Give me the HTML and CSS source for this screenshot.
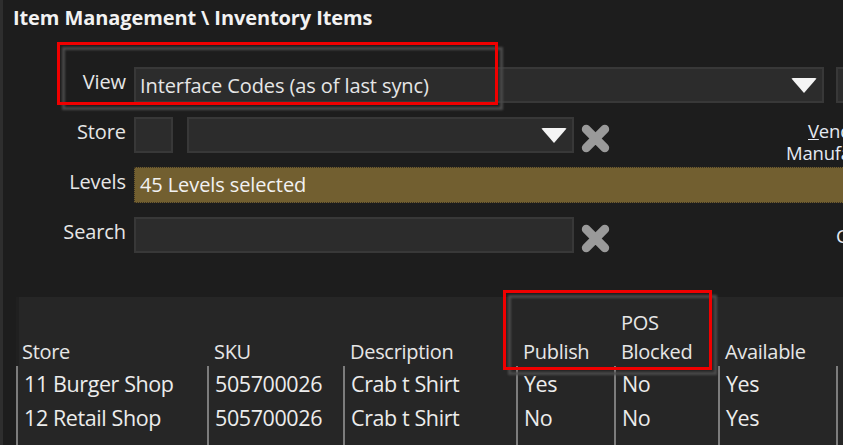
FILE: index.html
```html
<!DOCTYPE html>
<html>
<head>
<meta charset="utf-8">
<link rel="stylesheet" href="styles.css">
</head>
<body>
<div class="page">
  <div class="rail"></div>
  <div class="main">
    <h1 class="title">Item Management \ Inventory Items</h1>
    <div class="form">
      <div class="row">
        <div class="label">View</div>
        <div class="select view-select"><span class="value">Interface Codes (as of last sync)</span><span class="arrow"></span></div>
        <div class="box stub"></div>
      </div>
      <div class="row">
        <div class="label">Store</div>
        <div class="box code"></div>
        <div class="select store-select"><span class="value"></span><span class="arrow"></span></div>
        <svg class="clear" viewBox="0 0 30 30"><path d="M6 6 L24 24 M24 6 L6 24" /></svg>
        <div class="side-labels">
          <div class="side vendor"><u>V</u>endor</div>
          <div class="side">Manufacturer</div>
        </div>
      </div>
      <div class="row">
        <div class="label">Levels</div>
        <div class="levels">45 Levels selected</div>
      </div>
      <div class="row">
        <div class="label">Search</div>
        <div class="box search"></div>
        <svg class="clear" viewBox="0 0 30 30"><path d="M6 6 L24 24 M24 6 L6 24" /></svg>
        <div class="side-c">C</div>
      </div>
    </div>
    <div class="grid">
      <div class="hd first">Store</div>
      <div class="hd">SKU</div>
      <div class="hd">Description</div>
      <div class="hd">Publish</div>
      <div class="hd">POS<br>Blocked</div>
      <div class="hd">Available</div>
      <div class="hd"></div>

      <div class="cell first">11 Burger Shop</div>
      <div class="cell">505700026</div>
      <div class="cell">Crab t Shirt</div>
      <div class="cell">Yes</div>
      <div class="cell">No</div>
      <div class="cell">Yes</div>
      <div class="cell"></div>

      <div class="cell first">12 Retail Shop</div>
      <div class="cell">505700026</div>
      <div class="cell">Crab t Shirt</div>
      <div class="cell">No</div>
      <div class="cell">No</div>
      <div class="cell">Yes</div>
      <div class="cell"></div>

      <div class="cell first filler"></div>
      <div class="cell filler"></div>
      <div class="cell filler"></div>
      <div class="cell filler"></div>
      <div class="cell filler"></div>
      <div class="cell filler"></div>
      <div class="cell filler"></div>
    </div>
  </div>
  <div class="callout callout-view"></div>
  <div class="callout callout-cols"></div>
</div>
</body>
</html>
```

FILE: styles.css
```css
* { box-sizing: border-box; }
html, body {
  margin: 0;
  padding: 0;
  width: 843px;
  height: 445px;
  overflow: hidden;
  background: #1d1d1d;
}
.page {
  position: relative;
  display: flex;
  width: 843px;
  height: 445px;
  font-family: "Open Sans", "Noto Sans", sans-serif;
  color: #e8e8e8;
}
.rail {
  width: 3px;
  flex-shrink: 0;
  background: #2e2e2e;
}
.main {
  flex: 1;
  min-width: 0;
  overflow: hidden;
  display: flex;
  flex-direction: column;
}
.title {
  margin: 0;
  padding: 6px 0 0 10px;
  font-size: 20px;
  line-height: 24px;
  font-weight: 700;
  color: #f2f2f2;
  letter-spacing: -0.1px;
  white-space: nowrap;
}
.form {
  margin-top: 37px;
  display: flex;
  flex-direction: column;
  gap: 14px;
}
.row {
  display: flex;
  align-items: center;
  height: 36px;
  flex-shrink: 0;
}
.label {
  width: 123px;
  flex-shrink: 0;
  text-align: right;
  font-size: 20px;
  line-height: 24px;
  margin-right: 8px;
  margin-top: -6px;
  color: #e6e6e6;
  letter-spacing: -0.1px;
}
.select, .box {
  height: 36px;
  background: #2c2c2c;
  border: 2px solid #383838;
  flex-shrink: 0;
}
.select {
  display: flex;
  align-items: center;
  justify-content: space-between;
  padding: 0 5px 0 4px;
}
.value {
  font-size: 20px;
  color: #e6e6e6;
  letter-spacing: -0.1px;
  white-space: nowrap;
}
.arrow {
  width: 0;
  height: 0;
  border-left: 13px solid transparent;
  border-right: 13px solid transparent;
  border-top: 15px solid #f4f4f4;
  border-radius: 2px;
}
.view-select { width: 690px; }
.stub { width: 40px; margin-left: 12px; }
.code { width: 39px; }
.store-select { width: 387px; margin-left: 14px; }
.search { width: 440px; }
.clear {
  width: 31px;
  height: 31px;
  margin-left: 6px;
  margin-top: 6px;
  flex-shrink: 0;
}
.clear path {
  stroke: #9a9a9a;
  stroke-width: 8.5;
  stroke-linecap: round;
  fill: none;
}
.side-labels {
  margin-left: 175px;
  margin-top: 14px;
  display: flex;
  flex-direction: column;
  font-size: 18.5px;
  line-height: 22px;
  letter-spacing: -0.2px;
  color: #e4e9f2;
  white-space: nowrap;
  flex-shrink: 0;
}
.vendor { padding-left: 22px; }
.side-c {
  margin-left: 225px;
  margin-top: 2px;
  font-size: 19px;
  color: #e4e9f2;
  flex-shrink: 0;
}
.levels {
  width: 760px;
  flex-shrink: 0;
  height: 36px;
  background: #725f30;
  border: 1px dotted #3a3120;
  font-size: 20px;
  line-height: 34px;
  padding-left: 5px;
  color: #f2f2f2;
  letter-spacing: -0.1px;
}
.grid {
  margin-top: 44px;
  margin-left: 13px;
  flex: 1;
  background: #262626;
  display: grid;
  grid-template-columns: 191px 136px 173px 98px 104px 118px 60px;
  grid-template-rows: 69px 34px 34px 1fr;
}
.hd {
  display: flex;
  align-items: flex-end;
  padding-left: 7px;
  font-size: 20px;
  line-height: 29px;
  color: #e6e6e6;
  letter-spacing: -0.3px;
  white-space: nowrap;
}
.hd.first {
  padding-left: 3px;
  border-left: 3px solid #202020;
}
.cell {
  border-left: 2px solid #7c7c7c;
  padding-left: 6px;
  padding-top: 2px;
  font-size: 21.5px;
  line-height: 32px;
  color: #ececec;
  letter-spacing: -0.4px;
  white-space: nowrap;
}
.cell.first {
  padding-left: 6px;
}
.callout {
  position: absolute;
}
.callout::before {
  content: "";
  position: absolute;
  left: 5px;
  top: 5px;
  right: -5px;
  bottom: -5px;
  border: 3px solid #4a4a4a;
  filter: blur(0.8px);
}
.callout::after {
  content: "";
  position: absolute;
  inset: 0;
  border: 3px solid #f00000;
}
.callout-view {
  left: 57px;
  top: 42px;
  width: 441px;
  height: 63px;
}
.callout-cols {
  left: 503px;
  top: 290px;
  width: 209px;
  height: 80px;
}
```
